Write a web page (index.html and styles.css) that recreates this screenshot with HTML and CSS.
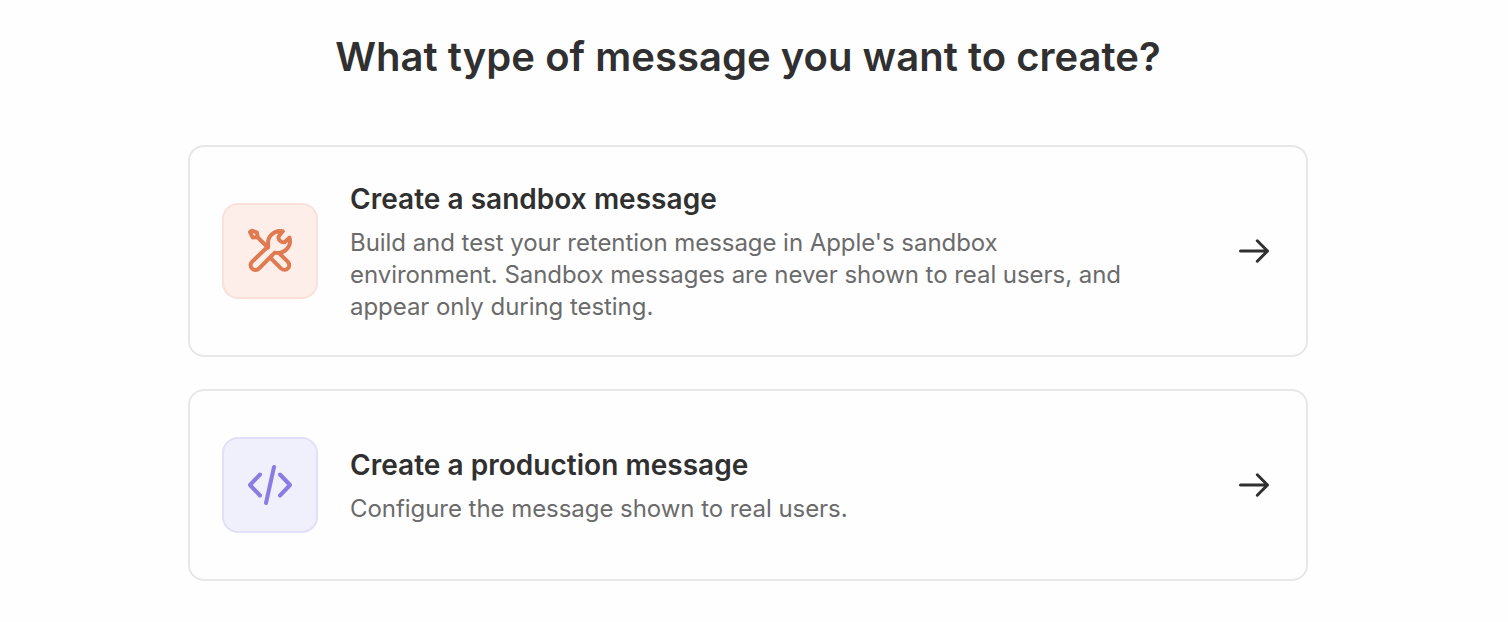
FILE: index.html
```
<!DOCTYPE html>
<html lang="en">
<head>
    <meta charset="UTF-8">
    <meta name="viewport" content="width=device-width, initial-scale=1.0">
    <title>Create a message</title>
    <link rel="stylesheet" href="styles.css">
</head>
<body>
    <main class="page">
        <h1 class="title">What type of message you want to create?</h1>
        <a class="card card-sandbox" href="#sandbox">
            <span class="tile tile-orange">
                <svg width="48" height="48" viewBox="0 0 48 48">
                    <path d="M11.5 10.2 22 20.5M4 5 5.6 3.7 10.8 5.4 11.8 10.2 6.6 10.4Z"/>
                    <path d="M36.8 4.3C29 2.4 20.3 9 22.3 19.2L6.2 34.6C1.4 39.4 8.4 46.4 13.2 41.4L28.8 25.6C38.6 27.7 45.9 19.5 43.5 10.6L38.5 15.2C35.2 16 31.9 12.8 32.6 9.4Z"/>
                    <path d="M24.7 31.2 35 41.4C39.8 45.8 46.1 39.4 41.7 34.6L33 26"/>
                </svg>
            </span>
            <span class="text">
                <strong class="name">Create a sandbox message</strong>
                <span class="desc">Build and test your retention message in Apple's sandbox environment. Sandbox messages are never shown to real users, and appear only during testing.</span>
            </span>
            <svg class="arrow" width="40" height="40" viewBox="0 0 40 40">
                <path d="M6.5 20H33.5M23.3 9.8 33.5 20 23.3 30.2"/>
            </svg>
        </a>
        <a class="card card-production" href="#production">
            <span class="tile tile-purple">
                <svg width="48" height="48" viewBox="0 0 48 48">
                    <path d="M14 13.5 4 24 14 34.5M28 6 20 42M34 13.5 44 24 34 34.5"/>
                </svg>
            </span>
            <span class="text">
                <strong class="name">Create a production message</strong>
                <span class="desc">Configure the message shown to real users.</span>
            </span>
            <svg class="arrow" width="40" height="40" viewBox="0 0 40 40">
                <path d="M6.5 20H33.5M23.3 9.8 33.5 20 23.3 30.2"/>
            </svg>
        </a>
    </main>
</body>
</html>
```
FILE: styles.css
```
* {
    box-sizing: border-box;
}
body {
    margin: 0;
    background-color: #fefefe;
    color: #303030;
    font-family: Inter, sans-serif;
}
.page {
    width: 1120px;
    margin-left: 188px;
    padding-top: 33px;
}
.title {
    margin: 0 0 64px;
    font-size: 40px;
    font-weight: 600;
    line-height: 48px;
    letter-spacing: 0.03px;
    text-align: center;
}
.card {
    display: flex;
    align-items: center;
    gap: 32px;
    margin-bottom: 32px;
    padding: 0 32px;
    border: 2px solid #e7e7e7;
    border-radius: 16px;
    color: inherit;
    text-decoration: none;
}
.card-sandbox {
    height: 212px;
}
.card-production {
    height: 192px;
}
.tile {
    display: flex;
    align-items: center;
    justify-content: center;
    width: 96px;
    height: 96px;
    border: 2px solid;
    border-radius: 16px;
}
.tile-orange {
    background-color: #fdeee9;
    border-color: #f9e1da;
    color: #e07a50;
}
.tile-purple {
    background-color: #f0effc;
    border-color: #e2dff8;
    color: #8b7be2;
}
svg {
    fill: none;
    stroke: currentColor;
    stroke-width: 4;
    stroke-linecap: round;
    stroke-linejoin: round;
}
.text {
    width: 784px;
}
.name {
    display: block;
    margin-bottom: 8px;
    font-size: 28px;
    font-weight: 600;
    line-height: 40px;
    letter-spacing: 0.03px;
}
.desc {
    display: block;
    color: #6b6b6b;
    font-size: 24px;
    line-height: 32px;
    letter-spacing: -0.05px;
}
.arrow {
    margin-left: auto;
    stroke-width: 3;
}
```
